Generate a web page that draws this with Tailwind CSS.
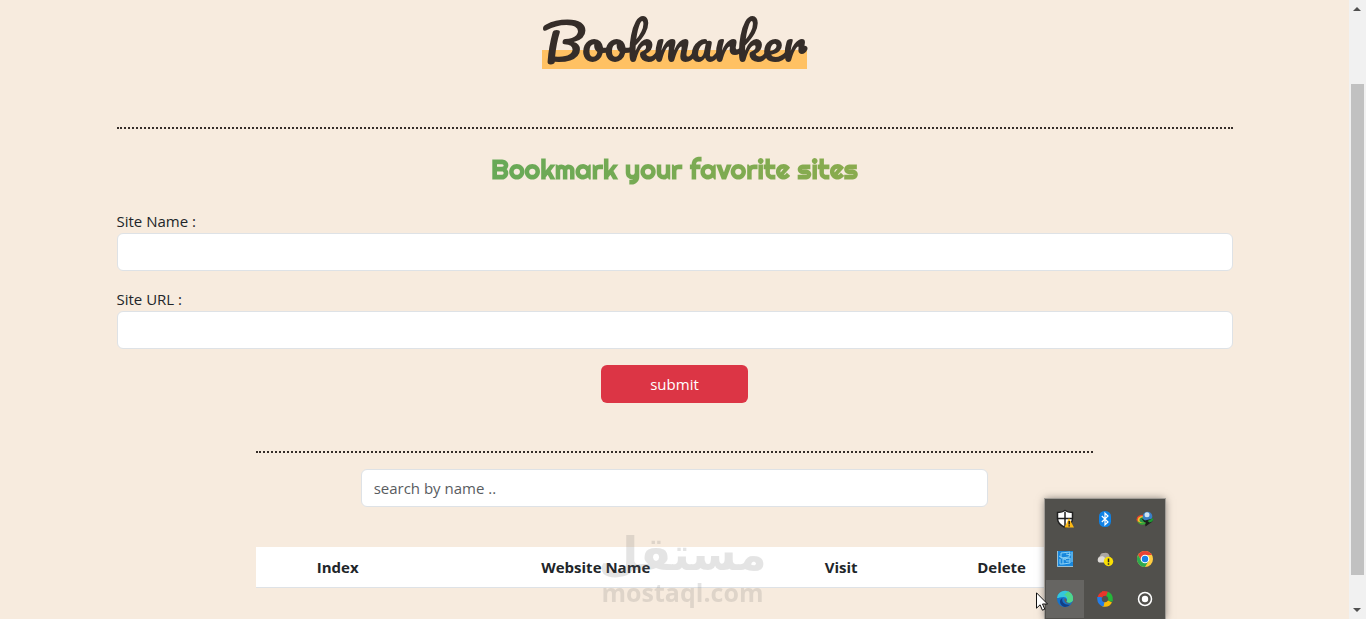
<!DOCTYPE html>
<html lang="en">
<head>
    <meta charset="UTF-8">
    <meta name="viewport" content="width=device-width, initial-scale=1.0">
    <title>Bookmarker</title>
    <script src="https://cdn.jsdelivr.net/npm/@tailwindcss/browser@4"></script>
</head>
<body class="relative flex h-screen overflow-hidden bg-[#f7ebde] font-['Segoe_UI','Open_Sans',sans-serif] text-[15px] text-[#212529]">

    <main class="min-w-0 flex-1">
        <div class="mx-auto max-w-[1140px] px-3">
            <header class="flex justify-center pt-[13px]">
                <h1 class="bg-linear-to-b from-transparent from-66% to-[#ffc163] to-66% font-['Pacifico',cursive] text-[50px] leading-[56px] font-normal text-[#352d29]">Bookmarker</h1>
            </header>

            <section class="mt-[58px] border-t-2 border-dotted border-[#352d29] pt-6">
                <h2 class="flex h-8 items-center justify-center">
                    <span class="bg-linear-to-r from-[#67a957] to-[#8aab4e] bg-clip-text font-['Righteous',sans-serif] text-[27px] leading-8 font-bold text-transparent">Bookmark your favorite sites</span>
                </h2>

                <form id="bookmarkForm" class="mt-6">
                    <label for="siteName" class="block leading-6">Site Name :</label>
                    <input type="text" id="siteName" class="block h-[38px] w-full rounded-md border border-[#dee2e6] bg-white px-3">
                    <label for="siteUrl" class="mt-4 block leading-6">Site URL :</label>
                    <input type="text" id="siteUrl" class="block h-[38px] w-full rounded-md border border-[#dee2e6] bg-white px-3">
                    <button type="submit" class="mx-auto mt-4 block h-[38px] w-[147px] rounded-md bg-[#dc3545] text-white">submit</button>
                </form>
            </section>

            <section class="mx-auto mt-12 w-3/4 border-t-2 border-dotted border-[#352d29] pt-4">
                <input type="search" id="searchInput" aria-label="Search by name" placeholder="search by name .." class="mx-auto block h-[38px] w-3/4 rounded-md border border-[#dee2e6] bg-white px-3 placeholder:text-[#595c5f]">

                <table class="mt-10 w-full text-center">
                    <thead>
                        <tr class="h-10 border-b border-[#dee2e6] bg-white">
                            <th class="px-2">Index</th>
                            <th class="px-2">Website Name</th>
                            <th class="px-2">Visit</th>
                            <th class="px-2">Delete</th>
                        </tr>
                    </thead>
                    <tbody id="tableBody"></tbody>
                </table>
            </section>
        </div>
    </main>

    <!-- scrollbar -->
    <aside class="flex w-[17px] shrink-0 flex-col items-center bg-[#f1f1f1]">
        <svg class="h-[17px] w-[17px]" viewBox="0 0 17 17" fill="#505050"><path d="M4 11h8L8 7z"/></svg>
        <div class="mt-[67px] w-[13px] flex-1 bg-[#c1c1c1]"></div>
        <div class="h-[27px]"></div>
        <svg class="h-[17px] w-[17px]" viewBox="0 0 17 17" fill="#505050"><path d="M4 6h8l-4 4z"/></svg>
    </aside>

    <!-- watermark -->
    <div class="pointer-events-none absolute top-[528px] left-[601px] flex w-[163px] flex-col items-center text-[#707070] opacity-18">
        <span lang="ar" dir="rtl" class="font-['DejaVu_Sans'] text-[46px] leading-[52px] font-bold whitespace-nowrap">مستقل</span>
        <span class="font-['Open_Sans'] text-[25px] leading-6 font-bold">mostaql.com</span>
    </div>

    <!-- tray menu -->
    <div class="absolute top-[499px] left-[1045px] grid h-[120px] w-[120px] grid-cols-3 grid-rows-3 bg-[#51504c] shadow-[0_0_8px_rgba(0,0,0,0.5)] outline outline-[#a09c96]">
        <div class="grid place-items-center">
            <svg class="size-5" viewBox="0 0 20 20">
                <path d="M10 1.500c2 1.500 4.500 2 7.500 2v6c0 4-3 7-7.500 9-4.500-2-7.500-5-7.500-9v-6c3 0 5.500-.5 7.500-2z" fill="#fff" stroke="#202020" stroke-width="1.500"/>
                <path d="M10 3v15M3 9.500h14" stroke="#202020" stroke-width="1.500"/>
                <path d="M14 9l5 9.500H9.500z" fill="#fdb913"/>
                <path d="M14.200 12v3.500M14.200 16.300v1.200" stroke="#202020" stroke-width="1.500"/>
            </svg>
        </div>
        <div class="grid place-items-center">
            <svg class="size-5" viewBox="0 0 20 20">
                <rect x="4" y="2" width="12" height="16" rx="5.500" fill="#0f82e6"/>
                <path d="M6.800 7l6.200 6-3 2.800V4.200L13 7l-6.200 6" fill="none" stroke="#fff" stroke-width="1.200"/>
            </svg>
        </div>
        <div class="grid place-items-center">
            <svg class="size-5" viewBox="0 0 20 20">
                <ellipse cx="8" cy="10.500" rx="6.500" ry="4.800" fill="#e8452c"/>
                <ellipse cx="8" cy="10.800" rx="5.300" ry="3.700" fill="#f3c52c"/>
                <ellipse cx="8.500" cy="11" rx="4" ry="2.800" fill="#27964b"/>
                <circle cx="12.500" cy="7.500" r="4.800" fill="#397fc6"/>
                <circle cx="12" cy="5.800" r="2.500" fill="#cfe4f4"/>
                <path d="M6 9l4 2.500 8-2c.5 3-2 4-4 5.500L10.500 17.500 10 14z" fill="#1b201a"/>
                <path d="M2 11.500c2 2.500 5 3 8.500 1.500v2C6.500 16.800 3 15 2 11.500z" fill="#2faa37"/>
                <path d="M12.500 12l5.500-3c.8 2.500-1 4-3.500 4.500z" fill="#209a35"/>
            </svg>
        </div>
        <div class="grid place-items-center">
            <svg class="size-5" viewBox="0 0 20 20" fill="none">
                <rect x="2" y="2" width="16" height="16" fill="#1887dc"/>
                <path d="M2.500 2v15.500H18" stroke="#9bbfd2"/>
                <path d="M6 4l9-1-1 5-8 1zM4 7l7 4M8 10l7-1v5l-7 1zM5 10v5h3M11 5l5 1M11 12h4M17 3v10" stroke="#8bd1f5"/>
            </svg>
        </div>
        <div class="grid place-items-center">
            <svg class="size-5" viewBox="0 0 20 20">
                <path d="M5 13a3.200 3.200 0 010-6 3.600 3.600 0 014-3 4.500 4.500 0 015.500 3v6z" fill="#aaa6a2"/>
                <path d="M4 13.500a3 3 0 010-5c2-2 5-1.500 6 .5l-1 4.500z" fill="#dedbd7"/>
                <circle cx="13.500" cy="12.500" r="4.700" fill="#fbe003"/>
                <path d="M13.500 9.500v3.800M13.500 14.300v1.400" stroke="#222" stroke-width="1.500"/>
            </svg>
        </div>
        <div class="grid place-items-center">
            <svg class="size-5" viewBox="0 0 20 20">
                <circle cx="10" cy="10" r="8" fill="#ffcd40"/>
                <path d="M3.070 6A8 8 0 0116.930 6H10L6.500 12z" fill="#ea4335"/>
                <path d="M3.070 6A8 8 0 0010 18l3.500-6H6.500z" fill="#2da94f"/>
                <circle cx="10" cy="10" r="4.300" fill="#fff"/>
                <circle cx="10" cy="10" r="3.200" fill="#1a80e8"/>
            </svg>
        </div>
        <div class="m-px grid place-items-center bg-[#666562]">
            <svg class="size-5" viewBox="0 0 20 20">
                <circle cx="10" cy="10" r="8" fill="#1673ca"/>
                <path d="M2 9a8 8 0 0116 1.500c0 3-4 4-6.500 2.500 1.500-1.500.5-5-3-5C5 8 3 9.500 2 9z" fill="#35c7dc"/>
                <path d="M13 2.600a8 8 0 015 8c0 3-4 4-6.500 2.400C14 9 11 6 9 6z" fill="#50d68a"/>
                <path d="M7.500 9c-1.500 4 2.500 7.500 8 6.500A8 8 0 0110 18c-5-1-7-7-2.500-9z" fill="#123f87"/>
                <path d="M9.500 9.500c1.500-.3 2.500 1.500 1.600 3 .5 1.500 3.500 2 6 .8-2 1.700-5.500 1.900-7-.3-.8-1.200-1-2.500-.6-3.500z" fill="#62615e"/>
            </svg>
        </div>
        <div class="grid place-items-center">
            <svg class="size-5" viewBox="0 0 20 20" fill="none" stroke-width="4.500">
                <path d="M4.800 8.500A5.500 5.500 0 0110 4.500" stroke="#e9352b"/>
                <path d="M7 4.500h4a5 5 0 012 .8" stroke="#e9352b"/>
                <path d="M12 4.900a5.500 5.500 0 013.500 5.600v2" stroke="#25b63a"/>
                <path d="M15 12.500a5.500 5.500 0 01-5 3H7.500" stroke="#f9bd08"/>
                <path d="M9 15.400a5.500 5.500 0 01-4.500-5.400V8" stroke="#237ee8"/>
            </svg>
        </div>
        <div class="grid place-items-center">
            <svg class="size-5" viewBox="0 0 20 20">
                <circle cx="10" cy="10" r="6.500" fill="none" stroke="#fff" stroke-width="1.500"/>
                <circle cx="10" cy="10" r="3.200" fill="#fff"/>
            </svg>
        </div>
    </div>

    <!-- pointer -->
    <svg class="pointer-events-none absolute top-[592px] left-[1036px] h-[19px] w-3" viewBox="0 0 12 19">
        <path d="M.5.8v15.400l3.600-3.400 2.300 5.400 2.400-1-2.300-5.200h5z" fill="#fff" stroke="#111"/>
    </svg>
</body>
</html>
